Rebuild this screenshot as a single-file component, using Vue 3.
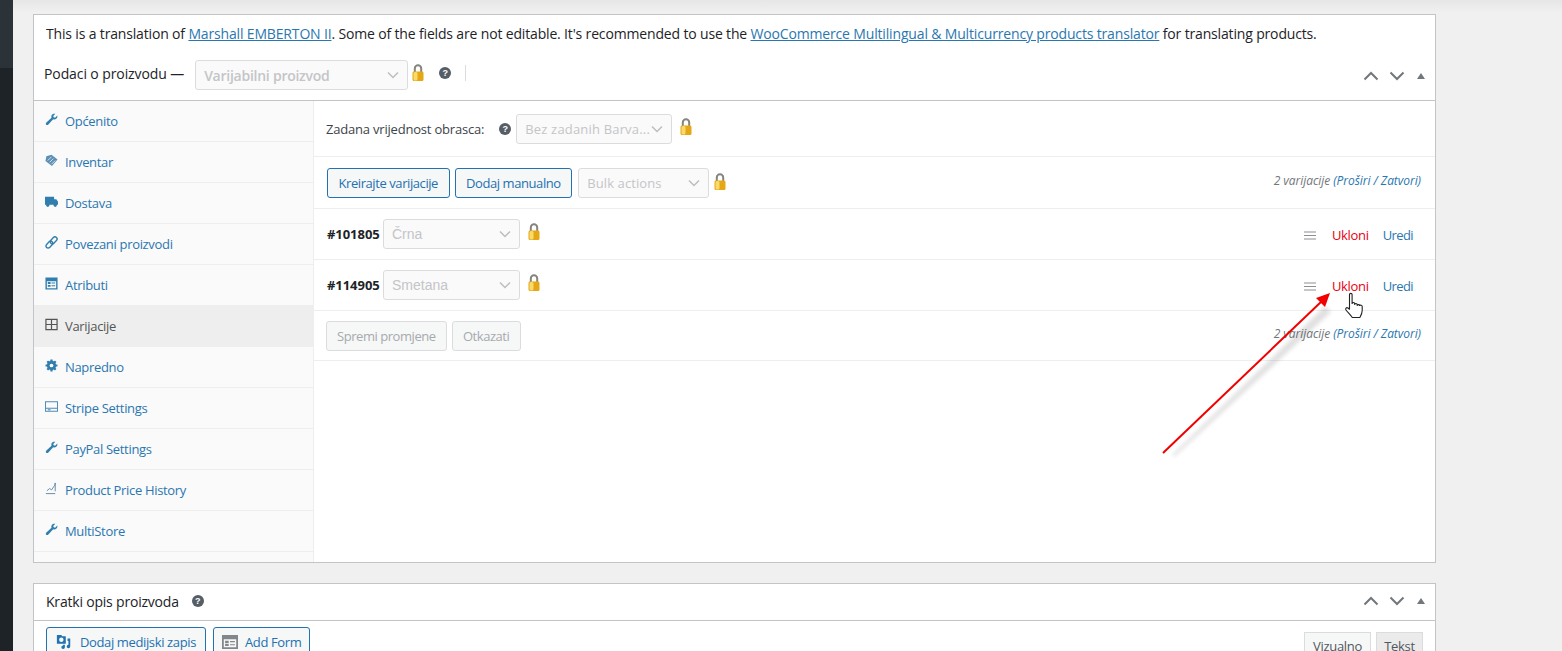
<script setup>
const tabs = [
  { label: 'Općenito', icon: 'wrench' },
  { label: 'Inventar', icon: 'tag' },
  { label: 'Dostava', icon: 'truck' },
  { label: 'Povezani proizvodi', icon: 'link' },
  { label: 'Atributi', icon: 'attr' },
  { label: 'Varijacije', icon: 'grid', active: true },
  { label: 'Napredno', icon: 'gear' },
  { label: 'Stripe Settings', icon: 'card' },
  { label: 'PayPal Settings', icon: 'wrench' },
  { label: 'Product Price History', icon: 'chart' },
  { label: 'MultiStore', icon: 'wrench' },
]
const variations = [
  { id: '#101805', value: 'Črna' },
  { id: '#114905', value: 'Smetana' },
]
</script>

<template>
  <div class="page">
    <aside class="adminbar"><div class="adminbar-top"></div></aside>
    <main class="main">
      <section class="panel first">
        <p class="notice">This is a translation of <a>Marshall EMBERTON II</a>. Some of the fields are not editable. It's recommended to use the <a>WooCommerce Multilingual &amp; Multicurrency products translator</a> for translating products.</p>
        <header class="data-head">
          <span class="data-title dt1">Podaci o proizvodu —</span>
          <span class="sel sel-type"><span>Varijabilni proizvod</span><svg class="chev" viewBox="0 0 12 8"><path d="M1 1.500l5 5 5-5" /></svg></span>
          <svg class="lock lock-type" viewBox="0 0 14 18"><use href="#lock" /></svg>
          <span class="help help-type">?</span>
          <span class="sep"></span>
          <span class="ctrls ctrls-top">
            <svg viewBox="0 0 16 10"><path d="M1.500 8.500L8 2l6.500 6.500" /></svg>
            <svg viewBox="0 0 16 10"><path d="M1.500 1.500L8 8l6.500-6.500" /></svg>
            <i class="tri"></i>
          </span>
        </header>
        <div class="body">
          <nav class="tabs">
            <div v-for="t in tabs" :key="t.label" class="tab" :class="{ active: t.active }">
              <svg class="ti" viewBox="0 0 14 14">
                <path v-if="t.icon === 'wrench'" class="fill" d="M13.200 2.600c.4 1.500-.1 3-1.400 3.800-1 .6-2.100.6-3 .2L3.600 12.400c-.6.700-1.700.800-2.300.200s-.500-1.700.200-2.300L7 5.200c-.4-1-.3-2.100.300-3C8.100 1 9.600.500 11.100.900L8.900 3.100l.400 1.600 1.600.400z" />
                <g v-else-if="t.icon === 'tag'">
                  <path class="fill tagfill" d="M7 .8L13.500 6 7.500 13 .5 7.500 1.500 2.500z" />
                  <path class="cut" d="M3 7l4-4M5 9l4-4M7 11l4-4" />
                </g>
                <path v-else-if="t.icon === 'truck'" class="fill" d="M0 2h9.800v8.500H0zM9.800 4.500h2.400L14 7.200v3.300H9.800zM3 9a1.900 1.900 0 1 1 0 3.800A1.900 1.900 0 0 1 3 9zM11 9a1.900 1.900 0 1 1 0 3.800A1.900 1.900 0 0 1 11 9z" />
                <g v-else-if="t.icon === 'link'" class="stroke" transform="rotate(-45 7 7)">
                  <rect x="-.5" y="4.700" width="8.500" height="4.600" rx="2.300" />
                  <rect x="6" y="4.700" width="8.500" height="4.600" rx="2.300" />
                </g>
                <path v-else-if="t.icon === 'attr'" class="fill" fill-rule="evenodd" d="M.5.500h13v13H.5zM2 4.500v7.500h10V4.500zM3 5.500h3v2H3zM3 8.500h3v2H3zM7 6h4v1H7zM7 9h4v1H7z" />
                <path v-else-if="t.icon === 'grid'" class="grid-stroke" d="M1 1.500h12v11H1zM7 1.500v11M1 7h12" />
                <g v-else-if="t.icon === 'gear'">
                  <path class="gear-teeth" d="M7 .6v12.800M.6 7h12.800M2.500 2.500l9 9M2.500 11.500l9-9" />
                  <circle class="fill" cx="7" cy="7" r="5" />
                  <circle class="gear-hole" cx="7" cy="7" r="2" />
                </g>
                <path v-else-if="t.icon === 'card'" class="stroke thinner" d="M.5 2h13v10H.5zM.5 8.800h13M3 10.500h3" />
                <path v-else class="stroke thin" d="M1 12.500h10M2 9.500l3-2.500 2 1.500 3.500-5 .5-2.500V10" />
              </svg>
              <a>{{ t.label }}</a>
            </div>
          </nav>
          <div class="content">
            <div class="row row-default">
              <span class="label">Zadana vrijednost obrasca:</span>
              <span class="help help-def">?</span>
              <span class="sel sel-def"><span>Bez zadanih Barva...</span><svg class="chev" viewBox="0 0 12 8"><path d="M1 1.500l5 5 5-5" /></svg></span>
              <svg class="lock" viewBox="0 0 14 18"><use href="#lock" /></svg>
            </div>
            <div class="row row-bulk">
              <button class="btn primary">Kreirajte varijacije</button>
              <button class="btn primary">Dodaj manualno</button>
              <span class="sel sel-bulk"><span>Bulk actions</span><svg class="chev" viewBox="0 0 12 8"><path d="M1 1.500l5 5 5-5" /></svg></span>
              <svg class="lock" viewBox="0 0 14 18"><use href="#lock" /></svg>
              <span class="count">2 varijacije <a>(Proširi / Zatvori)</a></span>
            </div>
            <div v-for="v in variations" :key="v.id" class="row row-var">
              <b class="vid">{{ v.id }}</b>
              <span class="sel sel-var"><span>{{ v.value }}</span><svg class="chev" viewBox="0 0 12 8"><path d="M1 1.500l5 5 5-5" /></svg></span>
              <svg class="lock lock-var" viewBox="0 0 14 18"><use href="#lock" /></svg>
              <span class="actions">
                <svg class="drag" viewBox="0 0 12 9"><path d="M0 1h12M0 4.500h12M0 8h12" /></svg>
                <a class="remove">Ukloni</a>
                <a class="edit">Uredi</a>
              </span>
            </div>
            <div class="row row-save">
              <button class="btn disabled">Spremi promjene</button>
              <button class="btn disabled cancel">Otkazati</button>
              <span class="count">2 varijacije <a>(Proširi / Zatvori)</a></span>
            </div>
          </div>
        </div>
      </section>

      <section class="panel second">
        <header class="short-head">
          <span class="data-title">Kratki opis proizvoda</span>
          <span class="help help-short">?</span>
          <span class="ctrls">
            <svg viewBox="0 0 16 10"><path d="M1.500 8.500L8 2l6.500 6.500" /></svg>
            <svg viewBox="0 0 16 10"><path d="M1.500 1.500L8 8l6.500-6.500" /></svg>
            <i class="tri"></i>
          </span>
        </header>
        <div class="editor-bar">
          <button class="btn primary media m1">
            <svg class="mi" viewBox="0 0 18 18"><path fill="#2271b1" fill-rule="evenodd" d="M1 1h5l1 1.500h4V11H1zM6 4a2.500 2.500 0 1 0 0 5 2.500 2.500 0 0 0 0-5zM13 5h3v9a2 2 0 1 1-2-2V8h-1zM8 12h2v3a2 2 0 1 1-2-2z" /></svg>
            Dodaj medijski zapis
          </button>
          <button class="btn primary media m2">
            <svg class="mi" viewBox="0 0 18 18"><path fill="#82878c" fill-rule="evenodd" d="M0 1h18v16H0zM2 6v9h14V6zM3.500 7.500h4v2.500h-4zM3.500 11h4v2.500h-4zM9 8h5.500v1.200H9zM9 11.500h5.500v1.200H9z" /></svg>
            Add Form
          </button>
          <span class="modes">
            <span class="mode on">Vizualno</span>
            <span class="mode off">Tekst</span>
          </span>
        </div>
      </section>
    </main>

    <svg class="overlay" viewBox="0 0 1562 651" width="1562" height="651">
      <defs>
        <filter id="sh" x="-20%" y="-20%" width="140%" height="140%"><feGaussianBlur stdDeviation="2" /></filter>
        <symbol id="lock" viewBox="0 0 14 18">
          <path d="M3.800 8V4.500a3.200 3.200 0 0 1 6.400 0V8" fill="none" stroke="#85857d" stroke-width="2" />
          <rect x="1.500" y="7.500" width="11" height="9.500" rx="1.500" fill="#e6a716" />
          <rect x="2.500" y="8" width="4" height="8.500" rx="1.500" fill="#fadb6a" />
        </symbol>
      </defs>
      <path d="M1172 455L1325 306l6 6-157 145z" fill="#000" opacity=".12" filter="url(#sh)" />
      <path d="M1163 453L1322 301" stroke="#f00000" stroke-width="2" />
      <path d="M1330 293l-14 5 9 9z" fill="#f00000" />
      <path d="M1349.500 294.500c0-1.500 2.600-1.500 2.600 0v9c0-1.300 2.600-1.300 2.600 0v1c0-1.300 2.500-1.300 2.500 0v1c0-1.200 2.300-1.200 2.300 0 1-.8 2.700-.4 2.700 1v4c0 3-1 4.500-2.400 7h-7.500c-1.500-2.200-4.800-5.500-6.300-7.500-1-1.500.5-3 2-2l1.500 1.200z" fill="#fff" stroke="#222" stroke-width="1.100" stroke-linejoin="round" />
    </svg>
  </div>
</template>

<style>
html, body { margin: 0; padding: 0; background: #f0f0f1; overflow: hidden; }
</style>

<style scoped>
.page {
  position: relative;
  display: flex;
  width: 1562px;
  height: 651px;
  overflow: hidden;
  background: linear-gradient(#e6e6e7 0, #f0f0f1 12px);
  font-family: "Open Sans", "Noto Sans", sans-serif;
  font-size: 13px;
  letter-spacing: -0.32px;
  color: #3c434a;
}
.adminbar { width: 13px; flex: none; background: #1d2327; }
.adminbar-top { height: 68px; background: #2c3338; }
.main { width: 1403px; margin-left: 20px; padding-top: 14px; display: flex; flex-direction: column; gap: 20px; }
.panel { background: #fff; border: 1px solid #c3c4c7; flex: none; }
a { color: #2a77b0; }
.notice {
  margin: 0;
  padding: 9px 12px 0;
  height: 25px;
  font-size: 14px;
  font-weight: 500;
  line-height: 20px;
  letter-spacing: -0.16px;
  color: #1d2327;
  white-space: nowrap;
}
.notice a { text-decoration: underline; }
.data-head {
  display: flex;
  align-items: center;
  box-sizing: border-box;
  height: 52px;
  padding: 0 10px;
  border-bottom: 1px solid #c3c4c7;
}
.data-title { font-size: 14px; font-weight: 500; color: #1d2327; letter-spacing: -0.2px; }
.dt1 { margin-top: -3px; letter-spacing: -0.1px; }
.sel {
  display: inline-flex;
  align-items: center;
  justify-content: space-between;
  box-sizing: border-box;
  height: 30px;
  padding: 0 8px;
  background: #fafafa;
  border: 1px solid #dcdcde;
  border-radius: 3px;
  color: #c4c5c8;
  font-size: 14px;
  white-space: nowrap;
}
.chev { width: 12px; height: 8px; fill: none; stroke: #bcbec1; stroke-width: 1.500; flex: none; }
.sel-type { width: 213px; margin-left: 11px; margin-top: 1px; font-weight: 600; letter-spacing: -0.25px; }
.lock { width: 14px; height: 18px; flex: none; }
.lock-type { margin: -4px 0 0 3px; }
.help {
  display: inline-flex;
  align-items: center;
  justify-content: center;
  width: 12px;
  height: 12px;
  border-radius: 50%;
  background: #555d66;
  color: #fff;
  font: bold 9px/12px "Liberation Sans", sans-serif;
  letter-spacing: 0;
  flex: none;
}
.help-type { margin: -3px 0 0 14px; }
.sep { width: 1px; height: 16px; background: #dcdcde; margin: -3px 0 0 14px; }
.ctrls { margin-left: auto; display: inline-flex; align-items: center; gap: 10px; }
.ctrls-top { padding-top: 2px; }
.ctrls svg { width: 16px; height: 10px; fill: none; stroke: #72777c; stroke-width: 2; }
.tri { width: 0; height: 0; border: 4.500px solid transparent; border-top: 0; border-bottom: 6px solid #72777c; margin-left: 2px; }
.body { display: flex; height: 461px; }
.tabs { width: 280px; flex: none; box-sizing: border-box; background: #fafafa; border-right: 1px solid #eee; }
.tab {
  display: flex;
  align-items: center;
  box-sizing: border-box;
  height: 41px;
  padding: 0 0 0 11px;
  border-bottom: 1px solid #eee;
}
.tab.active { background: #eee; }
.tab.active a { color: #555; }
.ti { width: 13px; height: 13px; margin: -4px 7px 0 0; flex: none; }
.fill { fill: #2f7eae; }
.tagfill { fill: #5b8fb3; }
.cut { stroke: #fafafa; stroke-width: .8; fill: none; }
.gear-teeth { stroke: #2f7eae; stroke-width: 2.400; fill: none; }
.gear-hole { fill: #fafafa; }
.stroke { fill: none; stroke: #2f7eae; stroke-width: 1.500; }
.thin { stroke-width: 1; stroke: #5f86a3; }
.thinner { stroke-width: 1.100; stroke: #4f8ab5; }
.grid-stroke { fill: none; stroke: #555; stroke-width: 1.300; }
.content { flex: 1; display: flex; flex-direction: column; min-width: 0; }
.row { display: flex; align-items: center; padding: 0 14px 0 12px; border-bottom: 1px solid #eee; flex: none; box-sizing: border-box; }
.row-default { height: 56px; }
.row-bulk { height: 52px; gap: 5px; padding-left: 13px; }
.row-var { height: 51px; padding-left: 13px; }
.row-save { height: 50px; gap: 5px; padding-left: 12px; }
.label { font-size: 13px; letter-spacing: -0.2px; }
.help-def { margin-left: 15px; margin-right: 5px; }
.sel-def { width: 156px; font-size: 13px; letter-spacing: 0.18px; }
.row-default .lock { margin: -4px 0 0 7px; }
.btn {
  box-sizing: border-box;
  height: 30px;
  padding: 0 10px;
  border-radius: 3px;
  font: inherit;
  letter-spacing: -0.45px;
  background: #f6f7f7;
  white-space: nowrap;
}
.primary { border: 1px solid #2271b1; color: #2271b1; padding: 0 10.500px; letter-spacing: -0.42px; }
.disabled { border: 1px solid #dcdcde; color: #a7aaad; }
.cancel { width: 69px; }
.sel-bulk { width: 131px; margin-left: 1px; font-size: 13px; letter-spacing: 0.1px; }
.row-bulk .lock { margin: -2px 0 0 -1px; }
.count { margin: -4px 0 0 auto; font-size: 12px; font-style: italic; color: #72777c; letter-spacing: -0.05px; }
.row-save .count { margin-top: -5px; }
.vid { font-size: 13px; font-weight: 700; color: #1d2327; width: 56px; flex: none; letter-spacing: -0.05px; }
.sel-var { width: 137px; font-family: "Liberation Sans", sans-serif; letter-spacing: 0; }
.lock-var { margin: -4px 0 0 7px; }
.actions { margin-left: auto; display: inline-flex; align-items: center; gap: 14px; padding: 2px 8px 0 0; }
.drag { width: 12px; height: 9px; fill: none; stroke: #8c8f94; stroke-width: 1.200; margin-right: 2px; }
.remove { color: #e8000f; }
.edit { letter-spacing: -0.6px; }
.short-head {
  display: flex;
  align-items: center;
  box-sizing: border-box;
  height: 37px;
  padding: 0 10px 2px 12px;
  border-bottom: 1px solid #c3c4c7;
}
.help-short { margin-left: 13px; }
.editor-bar { display: flex; align-items: flex-start; gap: 7px; padding: 6px 12px 0; height: 60px; box-sizing: border-box; }
.media { display: inline-flex; align-items: center; letter-spacing: -0.37px; }
.m1 { padding: 0 9px; gap: 8px; }
.m2 { padding: 0 8px; gap: 7px; }
.mi { width: 16px; height: 16px; flex: none; }
.modes { margin-left: auto; display: inline-flex; gap: 5px; padding-top: 5px; }
.mode {
  display: inline-flex;
  justify-content: center;
  box-sizing: border-box;
  height: 30px;
  padding-top: 4px;
  background: #ebebeb;
  border: 1px solid #dcdcde;
  color: #50575e;
}
.mode.on { background: #f6f7f7; width: 67px; }
.mode.off { width: 47px; }
.overlay { position: absolute; left: 0; top: 0; pointer-events: none; }
</style>
